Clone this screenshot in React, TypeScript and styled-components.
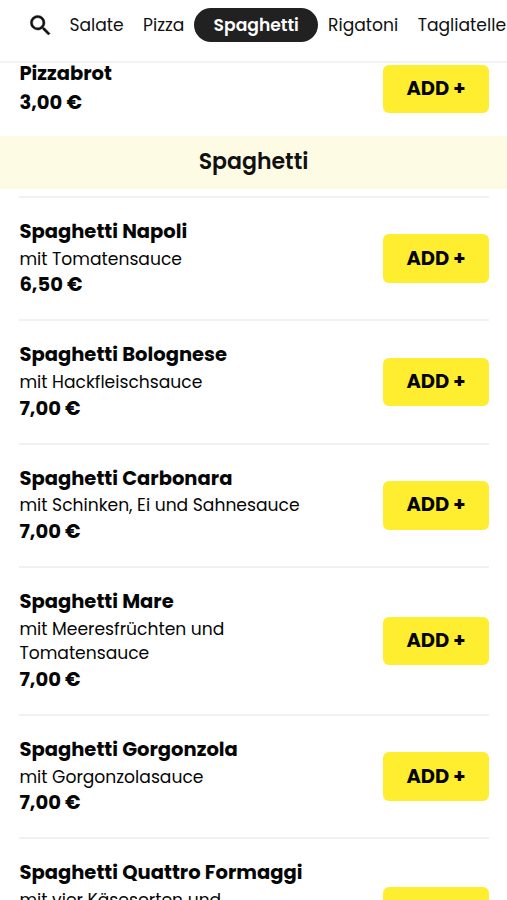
import React from "react";
import styled, { createGlobalStyle } from "styled-components";
import { MdSearch } from "react-icons/md";

interface Dish {
  name: string;
  description: string[];
  price: string;
}

const GlobalStyle = createGlobalStyle`
  * { box-sizing: border-box; }
  body {
    margin: 0;
    background: #fff;
    color: #060606;
    font-family: Poppins, Inter, sans-serif;
  }
`;

const Page = styled.div`
  height: 900px;
  overflow: hidden;
  background: #fff;
`;

const Header = styled.header`
  display: flex;
  align-items: center;
  height: 62.5px;
  padding: 0 0 9.7px 26.6px;
  border-bottom: 2px solid #f3f3f3;
`;

const SearchIcon = styled(MdSearch)`
  flex: none;
  width: 27px;
  height: 27px;
  color: #111;

  path:last-child {
    stroke: #111;
    stroke-width: 0.4px;
  }
`;

const Tabs = styled.nav`
  display: flex;
  padding-left: 6.1px;
`;

const Tab = styled.a<{ $active?: boolean }>`
  flex: none;
  height: 34px;
  padding: 0 ${(p) => (p.$active ? 19.5 : 9.7)}px;
  border-radius: 17px;
  background: ${(p) => (p.$active ? "#212121" : "transparent")};
  color: ${(p) => (p.$active ? "#fff" : "#111")};
  font-size: 17.15px;
  font-weight: ${(p) => (p.$active ? 600 : 400)};
  line-height: 35.4px;
  white-space: nowrap;
`;

const Row = styled.article<{ $first?: boolean }>`
  display: flex;
  align-items: center;
  justify-content: space-between;
  margin: 0 18.4px 0 19.4px;
  padding: ${(p) => (p.$first ? "0 0 20.9px" : "19.5px 0 19.4px")};
  border-top: ${(p) => (p.$first ? "0" : "2px solid #f1f1f1")};
`;

const Info = styled.div<{ $first?: boolean }>`
  flex: 1;
  margin: ${(p) => (p.$first ? "-5px 0 0" : "-1.5px 0 1.5px")};
`;

const Name = styled.h3`
  margin: 0;
  padding-bottom: 0.7px;
  font-size: 19.55px;
  font-weight: 700;
  line-height: 30px;
`;

const Description = styled.div`
  font-size: 17.15px;
  line-height: 24.5px;
`;

const Price = styled.div`
  margin-top: -0.7px;
  font-size: 19.55px;
  font-weight: 700;
  line-height: 28px;
`;

const AddButton = styled.button`
  flex: none;
  width: 105.2px;
  height: 48.5px;
  padding: 0;
  border: 0;
  border-radius: 6px;
  background: #ffed2f;
  color: #060606;
  font: 700 19.5px/48px Poppins, Inter, sans-serif;
`;

const SectionTitle = styled.h2`
  height: 52.3px;
  margin: 0 0 7.2px;
  background: #fefbe5;
  color: #111;
  font-size: 22.05px;
  font-weight: 600;
  line-height: 52.6px;
  text-align: center;
`;

const tabs = ["Salate", "Pizza", "Spaghetti", "Rigatoni", "Tagliatelle"];
const activeTab = "Spaghetti";

const bread: Dish = { name: "Pizzabrot", description: [], price: "3,00 €" };

const dishes: Dish[] = [
  { name: "Spaghetti Napoli", description: ["mit Tomatensauce"], price: "6,50 €" },
  { name: "Spaghetti Bolognese", description: ["mit Hackfleischsauce"], price: "7,00 €" },
  { name: "Spaghetti Carbonara", description: ["mit Schinken, Ei und Sahnesauce"], price: "7,00 €" },
  { name: "Spaghetti Mare", description: ["mit Meeresfrüchten und", "Tomatensauce"], price: "7,00 €" },
  { name: "Spaghetti Gorgonzola", description: ["mit Gorgonzolasauce"], price: "7,00 €" },
  { name: "Spaghetti Quattro Formaggi", description: ["mit vier Käsesorten und"], price: "7,00 €" },
];

function DishRow({ dish, first }: { dish: Dish; first?: boolean }) {
  return (
    <Row $first={first}>
      <Info $first={first}>
        <Name>{dish.name}</Name>
        {dish.description.map((line) => (
          <Description key={line}>{line}</Description>
        ))}
        <Price>{dish.price}</Price>
      </Info>
      <AddButton>ADD +</AddButton>
    </Row>
  );
}

const Menu = styled.main`
  article:last-child {
    padding-bottom: 0;
    align-items: flex-start;
  }

  article:last-child button {
    margin-top: 28.5px;
  }
`;

export default function App() {
  return (
    <Page>
      <GlobalStyle />
      <Header>
        <SearchIcon />
        <Tabs>
          {tabs.map((tab) => (
            <Tab key={tab} $active={tab === activeTab}>{tab}</Tab>
          ))}
        </Tabs>
      </Header>
      <Menu>
        <DishRow dish={bread} first />
        <SectionTitle>Spaghetti</SectionTitle>
        {dishes.map((dish) => (
          <DishRow key={dish.name} dish={dish} />
        ))}
      </Menu>
    </Page>
  );
}
